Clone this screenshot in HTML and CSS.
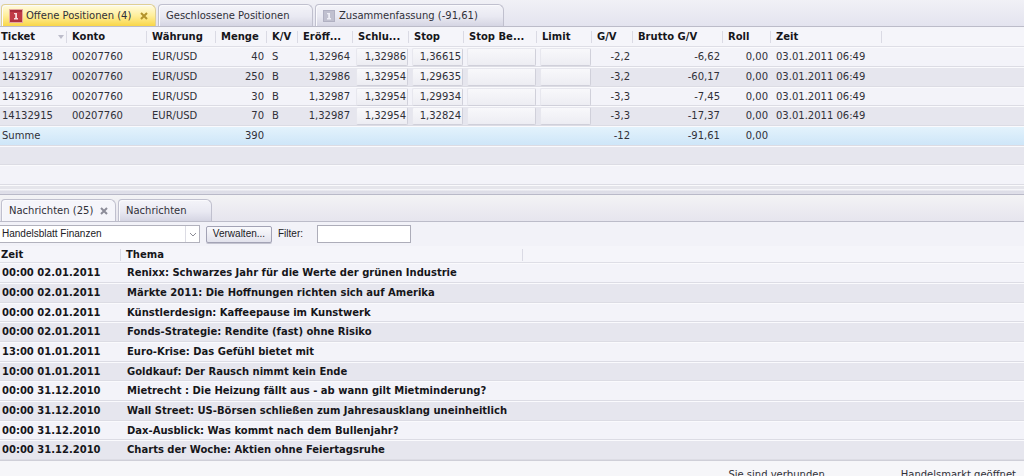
FILE: index.html
```html
<!DOCTYPE html>
<html lang="de">
<head>
<meta charset="utf-8">
<meta name="viewport" content="width=device-width, initial-scale=1">
<title>Offene Positionen</title>
<link rel="stylesheet" href="styles.css">
</head>
<body>
<div class="app">
  <nav class="tabs" aria-label="Positionen">
    <div class="tab tab-gold">
      <svg class="badge" viewBox="0 0 14 14" aria-hidden="true"><rect x=".5" y=".5" width="13" height="13" fill="#c03a46" stroke="#e6a9a0"/><rect x="1" y="1" width="12" height="2" fill="#a82c3c"/><rect x="1" y="11" width="12" height="2" fill="#b03340"/><path d="M5 4h3v5h1v1.500H5V9h1.200V5.200H5z" fill="#f6dcdc"/></svg>
      <button class="tab-label">Offene Positionen (4)</button>
      <button class="close" aria-label="Schließen"><svg viewBox="0 0 8 8"><path d="M1 1l6 6M7 1L1 7"/></svg></button>
    </div>
    <div class="tab tab-closed"><button class="tab-label">Geschlossene Positionen</button></div>
    <div class="tab tab-summary">
      <svg class="badge" viewBox="0 0 14 14" aria-hidden="true"><rect x="1.500" y="1.500" width="11" height="11" fill="#c0c0cf" stroke="#b0b0c2"/><path d="M5 4h3v5h1v1.500H5V9h1.200V5.200H5z" fill="#eeeef6"/></svg>
      <button class="tab-label">Zusammenfassung (-91,61)</button>
    </div>
  </nav>

  <table class="grid positions">
    <colgroup><col class="c-ticket"><col class="c-konto"><col class="c-curr"><col class="c-menge"><col class="c-kv"><col class="c-open"><col class="c-price"><col class="c-open"><col class="c-stopbe"><col class="c-open"><col class="c-gv"><col class="c-brutto"><col class="c-roll"><col class="c-zeit"><col></colgroup>
    <thead>
      <tr><th><span class="sort">Ticket <svg viewBox="0 0 6 4" aria-hidden="true"><path d="M0 0h6L3 4z"/></svg></span></th><th>Konto</th><th>Währung</th><th>Menge</th><th>K/V</th><th>Eröff...</th><th>Schlu...</th><th>Stop</th><th>Stop Be...</th><th>Limit</th><th>G/V</th><th>Brutto G/V</th><th>Roll</th><th>Zeit</th><td></td></tr>
    </thead>
    <tbody>
      <tr><td>14132918</td><td>00207760</td><td>EUR/USD</td><td class="num">40</td><td>S</td><td class="num">1,32964</td><td class="act"><button>1,32986</button></td><td class="act"><button>1,36615</button></td><td class="act"><button aria-label="Stop bearbeiten"></button></td><td class="act"><button aria-label="Limit"></button></td><td class="num">-2,2</td><td class="num">-6,62</td><td class="num">0,00</td><td>03.01.2011 06:49</td><td></td></tr>
      <tr><td>14132917</td><td>00207760</td><td>EUR/USD</td><td class="num">250</td><td>B</td><td class="num">1,32986</td><td class="act"><button>1,32954</button></td><td class="act"><button>1,29635</button></td><td class="act"><button aria-label="Stop bearbeiten"></button></td><td class="act"><button aria-label="Limit"></button></td><td class="num">-3,2</td><td class="num">-60,17</td><td class="num">0,00</td><td>03.01.2011 06:49</td><td></td></tr>
      <tr><td>14132916</td><td>00207760</td><td>EUR/USD</td><td class="num">30</td><td>B</td><td class="num">1,32987</td><td class="act"><button>1,32954</button></td><td class="act"><button>1,29934</button></td><td class="act"><button aria-label="Stop bearbeiten"></button></td><td class="act"><button aria-label="Limit"></button></td><td class="num">-3,3</td><td class="num">-7,45</td><td class="num">0,00</td><td>03.01.2011 06:49</td><td></td></tr>
      <tr><td>14132915</td><td>00207760</td><td>EUR/USD</td><td class="num">70</td><td>B</td><td class="num">1,32987</td><td class="act"><button>1,32954</button></td><td class="act"><button>1,32824</button></td><td class="act"><button aria-label="Stop bearbeiten"></button></td><td class="act"><button aria-label="Limit"></button></td><td class="num">-3,3</td><td class="num">-17,37</td><td class="num">0,00</td><td>03.01.2011 06:49</td><td></td></tr>
      <tr class="sum"><td>Summe</td><td></td><td></td><td class="num">390</td><td></td><td></td><td></td><td></td><td></td><td></td><td class="num">-12</td><td class="num">-91,61</td><td class="num">0,00</td><td></td><td></td></tr>
      <tr><td colspan="15"></td></tr>
      <tr><td colspan="15"></td></tr>
    </tbody>
  </table>

  <div class="splitter"></div>

  <nav class="tabs tabs-news" aria-label="Nachrichten">
    <div class="tab tab-active">
      <button class="tab-label">Nachrichten (25)</button>
      <button class="close" aria-label="Schließen"><svg viewBox="0 0 8 8"><path d="M1 1l6 6M7 1L1 7"/></svg></button>
    </div>
    <div class="tab tab-news"><button class="tab-label">Nachrichten</button></div>
  </nav>

  <form class="toolbar">
    <div class="combo">
      <select aria-label="Quelle"><option>Handelsblatt Finanzen</option></select>
      <svg viewBox="0 0 14 16" aria-hidden="true"><path class="edge" d="M.5 0v16"/><path d="M5 7l3 3 3-3"/></svg>
    </div>
    <button type="button" class="manage">Verwalten...</button>
    <label for="filter">Filter:</label>
    <input id="filter" type="text">
  </form>

  <table class="grid news">
    <colgroup><col class="n-zeit"><col class="n-thema"><col></colgroup>
    <thead><tr><th>Zeit</th><th>Thema</th><td></td></tr></thead>
    <tbody>
      <tr><td>00:00 02.01.2011</td><td>Renixx: Schwarzes Jahr für die Werte der grünen Industrie</td><td></td></tr>
      <tr><td>00:00 02.01.2011</td><td>Märkte 2011: Die Hoffnungen richten sich auf Amerika</td><td></td></tr>
      <tr><td>00:00 02.01.2011</td><td>Künstlerdesign: Kaffeepause im Kunstwerk</td><td></td></tr>
      <tr><td>00:00 02.01.2011</td><td>Fonds-Strategie: Rendite (fast) ohne Risiko</td><td></td></tr>
      <tr><td>13:00 01.01.2011</td><td>Euro-Krise: Das Gefühl bietet mit</td><td></td></tr>
      <tr><td>10:00 01.01.2011</td><td>Goldkauf: Der Rausch nimmt kein Ende</td><td></td></tr>
      <tr><td>00:00 31.12.2010</td><td>Mietrecht : Die Heizung fällt aus - ab wann gilt Mietminderung?</td><td></td></tr>
      <tr><td>00:00 31.12.2010</td><td>Wall Street: US-Börsen schließen zum Jahresausklang uneinheitlich</td><td></td></tr>
      <tr><td>00:00 31.12.2010</td><td>Dax-Ausblick: Was kommt nach dem Bullenjahr?</td><td></td></tr>
      <tr><td>00:00 31.12.2010</td><td>Charts der Woche: Aktien ohne Feiertagsruhe</td><td></td></tr>
    </tbody>
  </table>

  <footer class="status"><span>Sie sind verbunden</span><span>Handelsmarkt geöffnet</span></footer>
</div>
</body>
</html>
```
FILE: styles.css
```css
* { box-sizing: border-box; }
body {
  margin: 0;
  height: 100vh;
  overflow: hidden;
  background: #f2f2f8;
  color: #303038;
  font: 10px/14px "DejaVu Sans", Verdana, sans-serif;
}
button, input, select { font: inherit; color: inherit; }
button { padding: 0; border: 0; background: none; }
.app { display: flex; flex-direction: column; }

.tabs {
  display: flex;
  align-items: flex-end;
  gap: 2px;
  height: 27px;
  padding-left: 1px;
  border-bottom: 1px solid #bcbcc9;
  background: linear-gradient(#f1f1f6, #e4e4ef);
}
.tab {
  display: flex;
  align-items: center;
  height: 22px;
  border: 1px solid #c0c0ce;
  border-bottom: 0;
  border-radius: 4px 6px 0 0;
  padding: 1px 7px 0;
  background: linear-gradient(#f4f4f9, #e9e9f2 55%, #d5d5e3);
  box-shadow: inset 1px 1px #fafafd;
}
.tab-label { white-space: nowrap; }
.tab-gold {
  width: 155px;
  border-color: #dfcf94;
  background: linear-gradient(#fffbe2, #ffef9c 50%, #f9d648);
}
.tab-closed { width: 155px; }
.tab-summary { width: 189px; padding-left: 6px; }
.tab-active { width: 115px; background: #f5f5fa; }
.tab-news { width: 94px; }
.tabs-news { background: linear-gradient(#f3f3f5, #e6e5ee); }
.badge { flex: none; width: 14px; height: 14px; margin-right: 3px; }
.close { margin-left: auto; width: 8px; height: 8px; display: flex; }
.close svg { width: 8px; height: 8px; fill: none; stroke: #8c8c98; stroke-width: 2; }
.tab-gold .close svg { stroke: #b3932c; }

.grid { width: 100%; border-collapse: collapse; table-layout: fixed; }
.grid tr { height: 20px; }
.grid tbody tr:nth-child(3n) { height: 19px; }
.grid th, .grid td { padding: 0 3px 0 5px; white-space: nowrap; text-align: left; }
.grid th:first-child { padding-left: 1px; }
.grid td:first-child { padding-left: 2px; }
.grid th {
  color: #16161a;
  font-weight: bold;
  background: linear-gradient(#dadae4, #dadae4) right center / 1px 12px no-repeat;
}
.grid thead tr { background: #f5f5fa; box-shadow: inset 0 -1px #dedee6; }
.grid tbody tr { background: #f3f3f9; box-shadow: inset 0 -1px #dcdce4, inset 0 1px #fafafd; }
.grid tbody tr:nth-child(even) { background: #e6e6ee; }
.grid tbody .sum { background: linear-gradient(#e4f3fc, #cde5f8); }
.grid .num { text-align: right; }
.sort { display: flex; align-items: center; justify-content: space-between; }
.sort svg { width: 6px; height: 4px; fill: #bcbcca; }
.grid .act { padding: 0 1px 0 3px; }
.act button {
  display: block;
  width: 100%;
  height: 18px;
  padding-right: 1px;
  border: 1px solid #e7e7ee;
  border-right-color: #d0d0da;
  border-bottom-color: #d0d0da;
  border-radius: 2px;
  text-align: right;
  background: linear-gradient(#f8f8fb, #ededf3);
}
.c-ticket { width: 67px; }
.c-konto { width: 80px; }
.c-curr { width: 69px; }
.c-menge { width: 51px; }
.c-kv { width: 31px; }
.c-open { width: 55px; }
.c-price { width: 56px; }
.c-stopbe { width: 73px; }
.c-gv { width: 41px; }
.c-brutto { width: 90px; }
.c-roll { width: 48px; }
.c-zeit { width: 111px; }

.splitter {
  height: 10px;
  border-top: 1px solid #fafafc;
  border-bottom: 1px solid #b9b9c8;
  background: linear-gradient(#e5e5eb 3px, #f5f5f9 3px, #f5f5f9 4px, #dcdce6 5px, #e0e0ea);
}

.toolbar {
  display: flex;
  align-items: center;
  height: 24px;
  margin: 0;
  color: #202024;
  font-family: "Liberation Sans", Arial, sans-serif;
}
.combo { position: relative; width: 200px; height: 18px; }
.combo select {
  width: 100%;
  height: 100%;
  padding: 0 16px 0 2px;
  border: 1px solid #b2b2bd;
  border-left: 0;
  border-radius: 0;
  background: #fff;
  appearance: none;
}
.combo svg {
  position: absolute;
  top: 1px;
  right: 1px;
  width: 14px;
  height: 16px;
  fill: none;
  stroke: #8c8c96;
  pointer-events: none;
}
.combo .edge { stroke: #dcdce4; }
.manage {
  width: 66px;
  height: 17px;
  margin: 0 6px;
  border: 1px solid #a3a3b5;
  border-radius: 2px;
  background: linear-gradient(#fafafd, #e2e2ec);
  box-shadow: 0 1px #c4c4d0;
}
.toolbar input {
  width: 94px;
  height: 18px;
  margin-left: 14px;
  padding: 0 2px;
  border: 1px solid #adadb9;
  background: #fff;
}

.news thead tr { height: 17px; }
.news { color: #16161a; font-weight: bold; }
.news td + td { padding-left: 6px; }
.n-zeit { width: 121px; }
.n-thema { width: 402px; }

.status {
  display: flex;
  justify-content: flex-end;
  gap: 76px;
  padding: 7px 8px 2px;
  border-top: 1px solid #cfcfd8;
  background: #f6f6f9;
}
```
